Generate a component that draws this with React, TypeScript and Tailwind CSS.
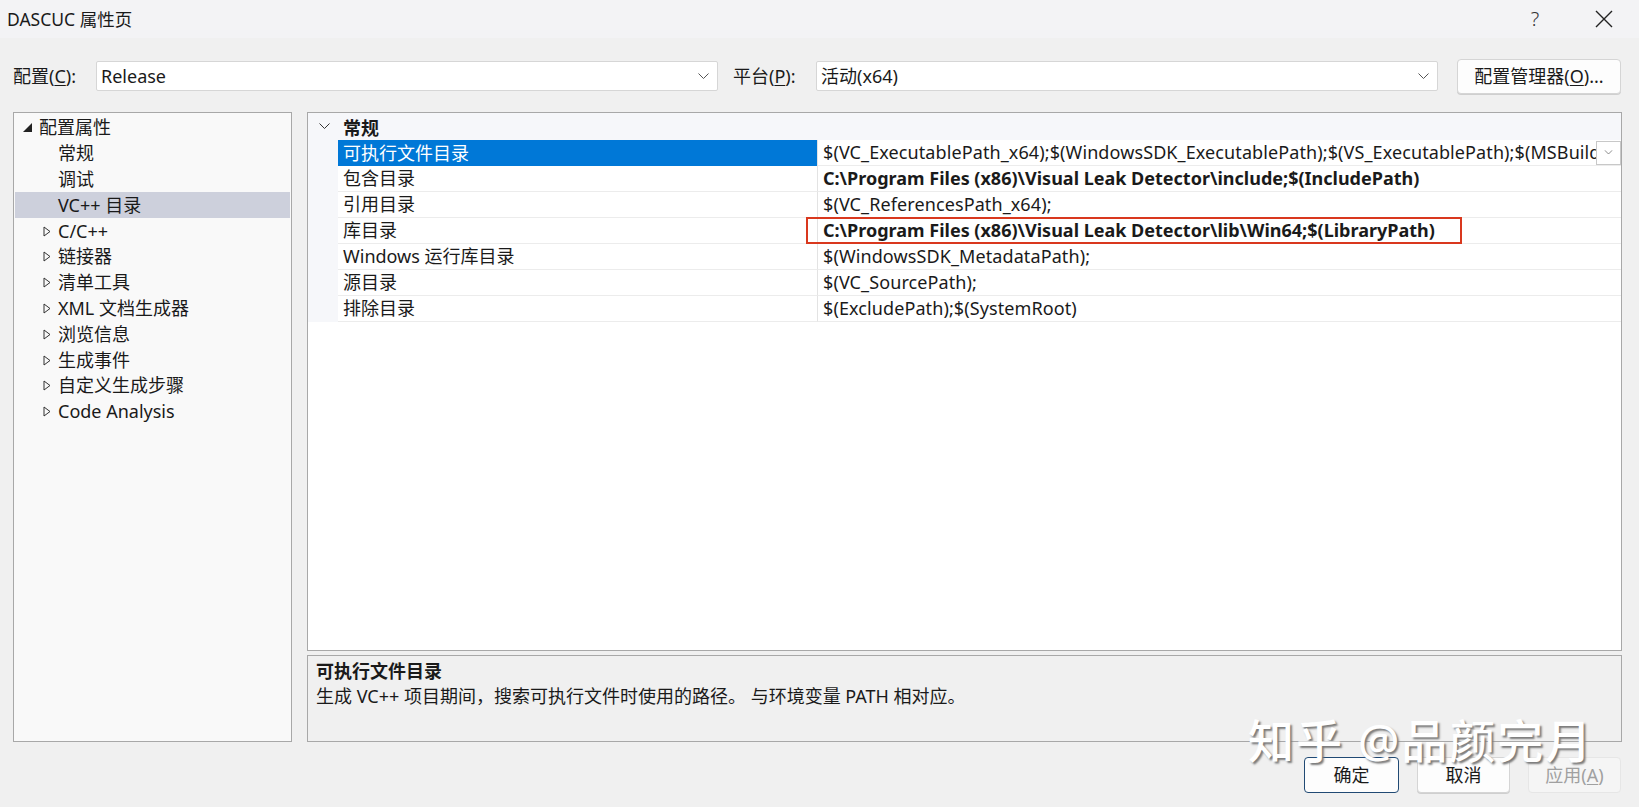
import React from 'react';

const font = "font-['Noto_Sans','Noto_Sans_CJK_SC',sans-serif]";

const Chevron: React.FC<{ className?: string }> = ({ className }) => (
  <svg width="11" height="7" viewBox="0 0 11 7" className={className}>
    <polyline points="0.5,0.5 5.5,5.5 10.5,0.5" fill="none" stroke="currentColor" strokeWidth="1" />
  </svg>
);

const OpenTriangle = () => (
  <svg width="8" height="11" viewBox="0 0 8 11" className="text-[#333]">
    <polygon points="1,1 7,5.5 1,10" fill="none" stroke="currentColor" strokeWidth="1" />
  </svg>
);

const treeItems = [
  { label: '常规' },
  { label: '调试' },
  { label: 'VC++ 目录', active: true },
  { label: 'C/C++', folder: true },
  { label: '链接器', folder: true },
  { label: '清单工具', folder: true },
  { label: 'XML 文档生成器', folder: true },
  { label: '浏览信息', folder: true },
  { label: '生成事件', folder: true },
  { label: '自定义生成步骤', folder: true },
  { label: 'Code Analysis', folder: true },
];

const rows = [
  {
    name: '可执行文件目录',
    value: '$(VC_ExecutablePath_x64);$(WindowsSDK_ExecutablePath);$(VS_ExecutablePath);$(MSBuild_ExecutablePath);$(FxCopDir);$(PATH);',
    selected: true,
  },
  { name: '包含目录', value: 'C:\\Program Files (x86)\\Visual Leak Detector\\include;$(IncludePath)', bold: true },
  { name: '引用目录', value: '$(VC_ReferencesPath_x64);' },
  { name: '库目录', value: 'C:\\Program Files (x86)\\Visual Leak Detector\\lib\\Win64;$(LibraryPath)', bold: true },
  { name: 'Windows 运行库目录', value: '$(WindowsSDK_MetadataPath);' },
  { name: '源目录', value: '$(VC_SourcePath);' },
  { name: '排除目录', value: '$(ExcludePath);$(SystemRoot)' },
];

const Combo: React.FC<{ value: string; width: string }> = ({ value, width }) => (
  <div className={`${width} shrink-0 h-[30px] bg-white border border-[#d6d6d6] flex items-center pl-[4px] pr-[8px] rounded-[2px]`}>
    <span className="flex-1 text-[18px] text-[#1a1a1a]">{value}</span>
    <Chevron className="text-[#555]" />
  </div>
);

export default function App() {
  return (
    <div className={`${font} relative w-[1639px] h-[807px] bg-[#f0f0f0] text-[#1a1a1a] flex flex-col overflow-hidden`}>
      {/* title bar */}
      <div className="h-[38px] shrink-0 bg-[#f3f3f5] flex items-center pl-[7px]">
        <span className="text-[17.5px] flex-1">DASCUC 属性页</span>
        <span className="text-[20px] font-light text-[#333] w-[20px] text-center mr-[50px]">?</span>
        <svg width="18" height="18" viewBox="0 0 18 18" className="mr-[26px] text-[#222]">
          <path d="M1 1 L17 17 M17 1 L1 17" stroke="currentColor" strokeWidth="1.4" />
        </svg>
      </div>

      {/* configuration row */}
      <div className="flex items-center h-[30px] shrink-0 mt-[23px] pl-[13px]">
        <span className="text-[18px] w-[83px] shrink-0">
          配置(<span className="underline underline-offset-2">C</span>):
        </span>
        <Combo value="Release" width="w-[622px]" />
        <span className="text-[18px] ml-[15px] w-[83px] shrink-0">
          平台(<span className="underline underline-offset-2">P</span>):
        </span>
        <Combo value="活动(x64)" width="w-[622px]" />
        <button className="ml-[19px] w-[164px] shrink-0 h-[35px] bg-[#fdfdfd] border border-[#d5d5d5] rounded-[4px] text-[18px] shadow-[0_1px_0_#cfcfcf]">
          配置管理器(<span className="underline underline-offset-2">O</span>)...
        </button>
      </div>

      {/* main area */}
      <div className="flex mt-[21px] pl-[13px] pr-[17px] h-[630px] shrink-0 gap-[15px]">
        {/* tree */}
        <div className="w-[279px] shrink-0 border border-[#a8a8a8] bg-[#f9f9f9] pt-[2px] px-[1px]">
          <div className="h-[25.8px] flex items-center text-[18px]">
            <svg width="9" height="9" viewBox="0 0 9 9" className="ml-[8px] mr-[7px]">
              <polygon points="9,0 9,9 0,9" fill="#222" />
            </svg>
            配置属性
          </div>
          {treeItems.map((it) => (
            <div
              key={it.label}
              className={`h-[25.8px] flex items-center text-[18px] whitespace-nowrap ${it.active ? 'bg-[#cdd0dc]' : ''}`}
            >
              <div className="w-[43px] shrink-0 flex justify-end pr-[7px]">{it.folder ? <OpenTriangle /> : null}</div>
              {it.label}
            </div>
          ))}
        </div>

        {/* right pane */}
        <div className="flex-1 min-w-0 flex flex-col gap-[4px]">
          <div className="h-[539px] shrink-0 border border-[#a8a8a8] bg-white flex flex-col">
            <div className="h-[27px] bg-[#f6f7fa] flex items-center">
              <div className="w-[30px] flex justify-center">
                <Chevron className="text-[#333] ml-[2px]" />
              </div>
              <span className="text-[18px] font-bold pl-[5px] pt-[4px]">常规</span>
            </div>
            {rows.map((r) => (
              <div key={r.name} className="h-[26px] flex">
                <div className="w-[30px] shrink-0 bg-[#f6f7fa]" />
                <div
                  className={`w-[480px] shrink-0 flex items-center pl-[5px] text-[18px] border-r border-[#e3e3e3] ${
                    r.selected ? 'bg-[#0078d7] text-white' : 'border-b border-b-[#ececec]'
                  }`}
                >
                  {r.name}
                </div>
                <div className="flex-1 min-w-0 flex items-center border-b border-[#ececec] pl-[5px]">
                  <span
                    className={`flex-1 min-w-0 whitespace-nowrap overflow-hidden text-[18px] ${
                      r.bold ? 'font-bold' : 'tracking-[0.1px]'
                    }`}
                  >
                    {r.value}
                  </span>
                  {r.selected ? (
                    <div className="w-[25px] h-[24px] shrink-0 border border-[#c8c8c8] bg-white flex items-center justify-center">
                      <Chevron className="text-[#666] scale-75" />
                    </div>
                  ) : null}
                </div>
              </div>
            ))}
          </div>

          {/* description */}
          <div className="flex-1 border border-[#a8a8a8] bg-[#f0f0f0] pl-[8px] pt-[3px]">
            <div className="text-[18px] font-bold leading-[25px]">可执行文件目录</div>
            <div className="text-[18px] leading-[25px]">
              生成 VC++ 项目期间，搜索可执行文件时使用的路径。 与环境变量 PATH 相对应。
            </div>
          </div>
        </div>
      </div>

      {/* buttons */}
      <div className="flex justify-end gap-[18px] pr-[18px] mt-[15px]">
        <button className="w-[95px] h-[36px] bg-[#fdfdfd] border border-[#214a74] rounded-[4px] text-[18px]">确定</button>
        <button className="w-[93px] h-[36px] bg-[#fdfdfd] border border-[#d5d5d5] rounded-[4px] text-[18px] shadow-[0_1px_0_#cfcfcf]">
          取消
        </button>
        <button className="w-[93px] h-[36px] bg-[#f5f5f5] border border-[#e6e6e6] rounded-[4px] text-[18px] text-[#a0a0a0]">
          应用(<span className="underline underline-offset-2">A</span>)
        </button>
      </div>

      {/* red annotation box */}
      <div className="absolute left-[806px] top-[217px] w-[656px] h-[27px] border-2 border-[#d9381e]" />

      {/* watermark */}
      <div className="absolute left-[1248px] top-[706px] text-[46px] font-medium text-white tracking-[2px] [text-shadow:2px_2px_2px_#7a7a7a] pointer-events-none">
        知乎 @品颜完月
      </div>
    </div>
  );
}
